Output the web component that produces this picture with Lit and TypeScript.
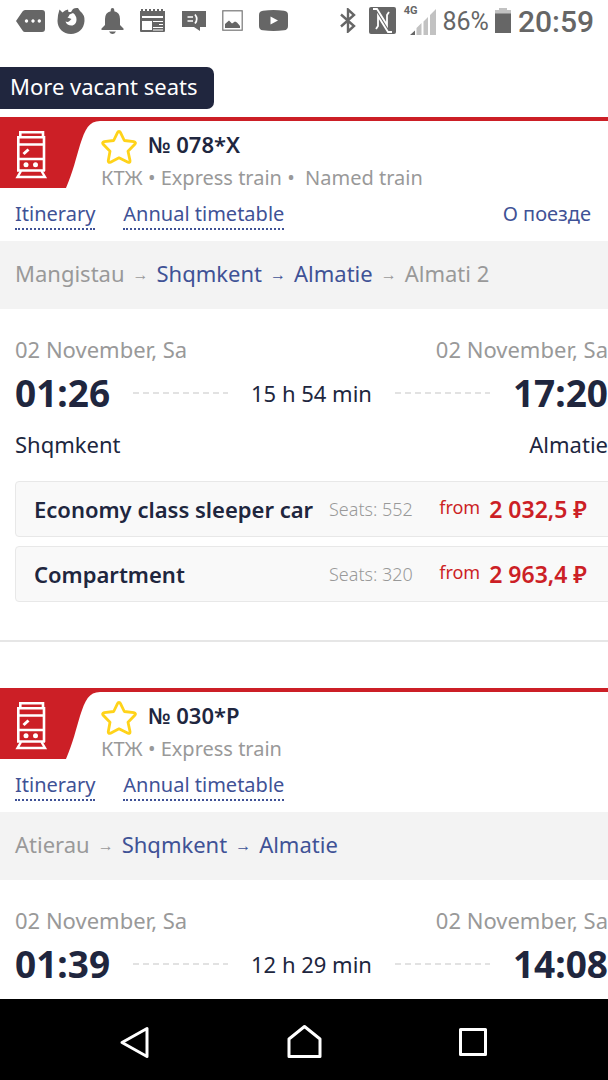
import { LitElement, html, css, svg, nothing } from "lit";
import { customElement, property } from "lit/decorators.js";

interface Fare {
  name: string;
  seats: number;
  price: string;
}

interface Trip {
  number: string;
  tags: string[];
  about: boolean;
  route: { name: string; active: boolean }[];
  date: string;
  depart: string;
  arrive: string;
  duration: string;
  from: string;
  to: string;
  fares: Fare[];
}

const trips: Trip[] = [
  {
    number: "078*Х",
    tags: ["КТЖ", "Express train", "\u00a0Named train"],
    about: true,
    route: [
      { name: "Mangistau", active: false },
      { name: "Shqmkent", active: true },
      { name: "Almatie", active: true },
      { name: "Almati 2", active: false },
    ],
    date: "02 November, Sa",
    depart: "01:26",
    arrive: "17:20",
    duration: "15 h 54 min",
    from: "Shqmkent",
    to: "Almatie",
    fares: [
      { name: "Economy class sleeper car", seats: 552, price: "2 032,5 ₽" },
      { name: "Compartment", seats: 320, price: "2 963,4 ₽" },
    ],
  },
  {
    number: "030*Р",
    tags: ["КТЖ", "Express train"],
    about: false,
    route: [
      { name: "Atierau", active: false },
      { name: "Shqmkent", active: true },
      { name: "Almatie", active: true },
    ],
    date: "02 November, Sa",
    depart: "01:39",
    arrive: "14:08",
    duration: "12 h 29 min",
    from: "",
    to: "",
    fares: [],
  },
];

@customElement("status-bar")
export class StatusBar extends LitElement {
  static styles = css`
    :host {
      display: flex;
      justify-content: space-between;
      height: 41px;
      padding: 0 14px 0 16px;
      color: #666;
      font-family: Roboto, sans-serif;
    }
    .group {
      display: flex;
      align-items: center;
    }
    svg {
      display: block;
      fill: currentColor;
    }
    .left {
      gap: 16px;
    }
    .message {
      margin-right: -4px;
    }
    .bluetooth {
      margin-right: 13px;
    }
    .network {
      display: flex;
      margin: 0 6px 0 8px;
    }
    .network-type {
      margin-right: -7px;
      font-size: 11px;
      line-height: 12px;
      font-weight: 700;
    }
    .percent {
      padding-top: 2px;
      font-size: 25px;
      line-height: 40px;
    }
    .battery {
      margin: 0 7px 0 6px;
    }
    .clock {
      padding-top: 2px;
      font-size: 30px;
      line-height: 40px;
      font-weight: 500;
    }
  `;

  render() {
    return html`
      <div class="group left">
        <svg class="message" width="29" height="22" viewBox="0 0 29 22">
          <path fill-rule="evenodd" d="M9 0H26Q29 0 29 3V19Q29 22 26 22H9Q7.500 22 6.500 20.500L0 11L6.500 1.500Q7.500 0 9 0ZM10.500 9.300a1.700 1.700 0 1 0 .01 0ZM17 9.300a1.700 1.700 0 1 0 .01 0ZM23.300 9.300a1.700 1.700 0 1 0 .01 0Z"/>
        </svg>
        <svg width="28" height="27" viewBox="0 0 28 27">
          <path d="M2.500 2.500L5.500 5.500Q8 3 11 2.500L11.500 5H14L16 2Q18 .500 21 1L23 4Q28 8 27.500 14C27 22 21 27 14 27C6 27 .500 21 .500 14Q.500 8 2.500 2.500Z"/>
          <path fill="#fff" d="M12.500 7.500L16 6Q19.500 8.500 19.500 12.500C19.500 16 17.500 18.500 14.500 18.500C11.500 18.500 9.300 17 8.500 14.500Q11 15.500 12.500 14L14.500 12L10.500 10.500Q12 9.500 12.500 7.500Z"/>
        </svg>
        <svg width="23" height="26" viewBox="0 0 23 26">
          <path d="M11.500 0Q13.300 0 13.300 2V3.200Q19 4.500 19 11V17L22.500 20.500V22H.500V20.500L4 17V11Q4 4.500 9.700 3.200V2Q9.700 0 11.500 0ZM8 23.500H15Q13.500 26 11.500 26Q9.500 26 8 23.500Z"/>
        </svg>
        <svg width="25" height="24" viewBox="0 0 25 24">
          <path d="M0 2H1V0H3V2H5V0H7V2H9V0H11V2H13V0H15V2H17V0H19V2H21V0H23V2H25V22Q25 23 24 23H1Q0 23 0 22Z"/>
          <path fill="#fff" d="M2 7H23V9H2ZM2 12H12V21H2ZM13 12H23V13H13ZM19 15H23V16H19ZM13 18H23V19H13ZM13 20.500H23V21.500H13Z"/>
        </svg>
        <svg width="25" height="21" viewBox="0 0 25 21">
          <path d="M1 1H25V17H19V21L13 17H1Z"/>
          <path d="M6.500 7H12M6.500 11H12M14 4.500Q17.500 9 14 13.500" fill="none" stroke="#fff" stroke-width="1.700"/>
        </svg>
        <svg width="21" height="21" viewBox="0 0 21 21">
          <rect x=".8" y=".8" width="19.400" height="19.400" fill="none" stroke="#777" stroke-width="1.200"/>
          <path d="M3 18V14L7 10.500L10 13.500L13 11.500L15 12.500L18 16V18Z"/>
        </svg>
        <svg width="29" height="21" viewBox="0 0 29 21">
          <path fill-rule="evenodd" d="M4 .700Q14.500-.500 25 .700Q29 1 29 5V16Q29 20 25 20.300Q14.500 21.500 4 20.300Q0 20 0 16V5Q0 1 4 .700ZM11.500 6.500V14.500L19 10.500Z"/>
        </svg>
      </div>
      <div class="group">
        <svg class="bluetooth" width="16" height="25" viewBox="0 0 16 25">
          <path d="M1 6.500L14 18L8 23.500V1.500L14 7L1 18.500" fill="none" stroke="currentColor" stroke-width="2.400"/>
        </svg>
        <svg width="27" height="27" viewBox="0 0 27 27">
          <rect width="27" height="27" rx="2"/>
          <path d="M4 2H8L18 18V8L20 5M23 25H19L9 9V19L7 22" fill="none" stroke="#fff" stroke-width="1.800"/>
        </svg>
        <div class="network">
          <span class="network-type">4G</span>
          <svg width="26" height="31" viewBox="0 0 26 31">
            <path d="M0 30L5 25.500V30Z"/>
            <path fill="#c2c2c2" d="M6.500 30V23L11.500 18V30ZM13.500 30V16.500L18 12V30ZM20 30V10L26 4V30Z"/>
          </svg>
        </div>
        <span class="percent">86%</span>
        <svg class="battery" width="16" height="25" viewBox="0 0 16 25">
          <path fill="#c2c2c2" d="M4 0H12V2H16V6H0V2H4Z"/>
          <path d="M0 5.500H16V25H0Z"/>
        </svg>
        <span class="clock">20:59</span>
      </div>
    `;
  }
}

@customElement("train-card")
export class TrainCard extends LitElement {
  @property({ attribute: false }) trip!: Trip;

  static styles = css`
    :host {
      display: block;
      border-bottom: 2px solid #e6e6e6;
      color: #20263e;
      background: #fff;
      font-size: 22px;
      line-height: 32px;
    }
    header {
      display: flex;
      border-top: 4px solid #cc1f26;
    }
    .tab {
      display: block;
      flex: none;
      margin: -4px 1px 0 0;
    }
    .title {
      display: flex;
      gap: 11px;
      height: 37px;
      padding-top: 9px;
    }
    .favorite {
      align-self: flex-start;
      padding: 0;
      border: 0;
      background: none;
    }
    .favorite svg {
      display: block;
    }
    h2 {
      margin: 0;
      font-size: 22px;
      line-height: 28px;
      font-weight: 600;
    }
    .muted {
      color: #999;
    }
    .tags {
      font-size: 20px;
      line-height: 22px;
      white-space: nowrap;
    }
    .links {
      display: flex;
      gap: 28px;
      padding: 11px 17px 11px 15px;
    }
    a {
      color: #3f5296;
      text-decoration: none;
      line-height: 28px;
    }
    .links a {
      font-size: 20px;
    }
    .dotted {
      border-bottom: 2px dotted #3f5296;
    }
    .about {
      margin-left: auto;
    }
    .route {
      display: flex;
      gap: 8px;
      padding: 16px 15px 20px;
      color: #999;
      background: #f3f3f3;
      white-space: nowrap;
    }
    .active {
      color: #3f5296;
    }
    .arrow {
      font-family: "Liberation Sans", sans-serif;
      font-size: 16px;
      line-height: 36px;
      height: 32px;
    }
    .schedule {
      display: grid;
      gap: 2px;
      padding: 24px 0 0 15px;
    }
    .row {
      display: flex;
      align-items: center;
      justify-content: space-between;
    }
    .times {
      height: 52px;
      gap: 23px;
    }
    .time {
      font-size: 37px;
      font-weight: 700;
    }
    .dash {
      flex: 1;
      height: 2px;
      background: repeating-linear-gradient(90deg, #e2e2e2 0 6px, transparent 6px 10px);
    }
    .stations {
      height: 46px;
    }
    .fares {
      display: grid;
      gap: 9px;
      margin: 0 -8px 0 0;
      padding: 14px 0 38px 15px;
      list-style: none;
    }
    .fare {
      display: grid;
      grid-template-columns: 295px 90px 1fr;
      align-items: center;
      height: 54px;
      padding: 0 28px 0 18px;
      border: 1px solid #e8e8e8;
      border-radius: 4px;
      color: #20263e;
      background: #f9f9f9;
      white-space: nowrap;
    }
    .fare-name {
      font-weight: 600;
    }
    .seats {
      color: #999;
      font-size: 18px;
      font-weight: 300;
    }
    .cost {
      display: flex;
      justify-content: flex-end;
      gap: 9px;
      color: #cc1f26;
    }
    .prefix {
      font-size: 18px;
      line-height: 24px;
    }
    .price {
      font-size: 23px;
      font-weight: 600;
    }
  `;

  render() {
    const t = this.trip;
    return html`
      <header>
        <svg class="tab" width="100" height="71" viewBox="0 0 100 71">
          <path fill="#cc1f26" d="M0 0H100V4C89 4 85 12 80 28C76 41 73 55 66 71H0Z"/>
          <g fill="none" stroke="#fff" stroke-width="2.600">
            <path d="M20.300 20V15.300H43V20M18.300 54V20.300H44V54M18 27.500H44M18 42H44M17 53.500H45"/>
            <path d="M23.500 37L28.500 32.500" stroke-width="3"/>
            <path d="M21 54L17.500 60H45L41.500 54" stroke-width="2.400"/>
          </g>
          <circle cx="26" cy="47.800" r="2.500" fill="#fff"/>
          <circle cx="35.500" cy="47.800" r="2.500" fill="#fff"/>
        </svg>
        <div>
          <div class="title">
            <button class="favorite" aria-label="Add to favorites">
              <svg width="36" height="34" viewBox="0 0 36 34">
                <path d="M18 1.500Q19 1.500 19.500 2.600L23.300 10.500L32.800 11.700Q35.500 12.300 33.800 14.300L27 21.200L29 30.500Q29.200 33 27 32.200L18 27.800L9.500 32.200Q7 33 7.300 30.500L9 21.200L2.200 14.300Q.700 12.300 3.200 11.700L12.700 10.500L16.500 2.600Q17 1.500 18 1.500Z" fill="none" stroke="#ffd31a" stroke-width="2.800" stroke-linejoin="round"/>
              </svg>
            </button>
            <h2>№ ${t.number}</h2>
          </div>
          <div class="tags muted">${t.tags.join(" • ")}</div>
        </div>
      </header>
      <nav class="links">
        <a class="dotted" href="#itinerary">Itinerary</a>
        <a class="dotted" href="#timetable">Annual timetable</a>
        ${t.about ? html`<a class="about" href="#about">О поезде</a>` : nothing}
      </nav>
      <div class="route">
        ${t.route.map(
          (stop, i) => html`
            ${i > 0
              ? html`<span class="arrow ${stop.active && t.route[i - 1].active ? "active" : ""}">→</span>`
              : nothing}
            <span class=${stop.active ? "active" : ""}>${stop.name}</span>
          `
        )}
      </div>
      <div class="schedule">
        <div class="row muted"><span>${t.date}</span><span>${t.date}</span></div>
        <div class="row times">
          <span class="time">${t.depart}</span>
          <span class="dash"></span>
          <span>${t.duration}</span>
          <span class="dash"></span>
          <span class="time">${t.arrive}</span>
        </div>
        <div class="row stations"><span>${t.from}</span><span>${t.to}</span></div>
      </div>
      <ul class="fares">
        ${t.fares.map(
          (f) => html`
            <li>
              <a class="fare" href="#seats">
                <span class="fare-name">${f.name}</span>
                <span class="seats">Seats: ${f.seats}</span>
                <span class="cost"><span class="prefix">from</span><span class="price">${f.price}</span></span>
              </a>
            </li>
          `
        )}
      </ul>
    `;
  }
}

@customElement("app-root")
export class AppRoot extends LitElement {
  static styles = css`
    :host {
      display: flex;
      flex-direction: column;
      height: 100vh;
      overflow: hidden;
      background: #fff;
      font-family: "Noto Sans", sans-serif;
    }
    main {
      flex: 1;
      min-height: 0;
      padding-top: 26px;
      overflow: hidden;
    }
    h1 {
      width: fit-content;
      margin: 0 0 8px;
      padding: 3px 16px 7px 10px;
      border-radius: 0 7px 7px 0;
      color: #fff;
      background: #20263e;
      font-size: 22px;
      line-height: 32px;
      font-weight: 400;
    }
    .cards {
      display: grid;
      gap: 46px;
    }
    .keys {
      display: flex;
      flex: none;
      justify-content: center;
      gap: 134px;
      height: 81px;
      padding-top: 4px;
      box-sizing: border-box;
      background: #000;
    }
    .key {
      padding: 0;
      border: 0;
      background: none;
    }
    .key svg {
      display: block;
      fill: none;
      stroke: #fff;
      stroke-width: 3;
      stroke-linejoin: round;
    }
  `;

  render() {
    const key = (label: string, shape: unknown) => html`
      <button class="key" aria-label=${label}>
        <svg width="35" height="35" viewBox="0 0 35 35">${shape}</svg>
      </button>
    `;
    return html`
      <status-bar></status-bar>
      <main>
        <h1>More vacant seats</h1>
        <div class="cards">${trips.map((t) => html`<train-card .trip=${t}></train-card>`)}</div>
      </main>
      <nav class="keys">
        ${key("Back", svg`<path d="M29 4.500V32.500L4 18.500Z"/>`)}
        ${key("Home", svg`<path d="M2 32.500V15L17.500 2.500L33 15V32.500Z"/>`)}
        ${key("Recent apps", svg`<rect x="4.500" y="5.500" width="25" height="25"/>`)}
      </nav>
    `;
  }
}
